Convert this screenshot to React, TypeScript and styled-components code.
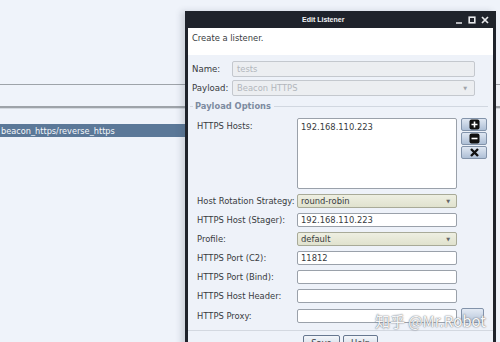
import React from "react";
import styled, { createGlobalStyle } from "styled-components";

const Global = createGlobalStyle`
  html, body { margin: 0; padding: 0; }
  body {
    width: 500px; height: 342px; overflow: hidden;
    background: #eff3fa;
    font-family: "DejaVu Sans", "Noto Sans CJK SC", sans-serif;
    font-size: 8.4px;
    color: #383b40;
  }
  * { box-sizing: border-box; }
`;

const Desktop = styled.div`
  position: relative;
  width: 500px;
  height: 342px;
  overflow: hidden;
`;

const MainWindow = styled.div`
  display: flex;
  flex-direction: column;
  padding-top: 84px;
`;

const Rule = styled.div<{ $gap: number; $double?: boolean }>`
  height: ${(p) => (p.$double ? 2 : 1)}px;
  margin-bottom: ${(p) => p.$gap}px;
  background: #9ea3a9;
  border-bottom: ${(p) => (p.$double ? "1px solid #d4d9e0" : "none")};
  box-sizing: content-box;
`;

const SelectedRow = styled.div`
  height: 13px;
  background: #5b7898;
  color: #f4f7fb;
  display: flex;
  align-items: center;
  padding-left: 1px;
  font-size: 8.2px;
  width: 190px;
`;

const Dialog = styled.div`
  position: absolute;
  left: 185px;
  top: 11px;
  width: 311px;
  height: 345px;
  background: #1f232b;
  padding: 0 3px 0 3px;
  box-shadow: -4px 0 6px rgba(60, 70, 90, 0.18);
  display: flex;
  flex-direction: column;
`;

const TitleBar = styled.div`
  height: 17px;
  position: relative;
  display: flex;
  align-items: center;
  color: #f2f3f5;
  font-family: "Liberation Sans", sans-serif;
  font-weight: bold;
  font-size: 7px;
  padding-left: 114px;
`;

const TitleButtons = styled.div`
  position: absolute;
  right: 4px;
  top: 5px;
  display: flex;
  gap: 5px;
  align-items: center;
`;

const Client = styled.div`
  flex: 1;
  background: #eef2f9;
  display: flex;
  flex-direction: column;
`;

const Header = styled.div`
  height: 27px;
  background: #ffffff;
  padding: 5px 0 0 4px;
`;

const TopRow = styled.div<{ $mt: number }>`
  display: flex;
  align-items: center;
  margin-top: ${(p) => p.$mt}px;
  padding-left: 4px;
  height: 16px;
`;

const TopLabel = styled.div`
  width: 40px;
  font-size: 8.6px;
`;

const DisabledField = styled.div`
  width: 243px;
  height: 16px;
  border: 1px solid #c4c8ce;
  border-radius: 2px;
  background: #eceef1;
  color: #b2b6bc;
  display: flex;
  align-items: center;
  padding-left: 4px;
  position: relative;
`;

const Fieldset = styled.div`
  margin: 10px 5px 0 2px;
  position: relative;
  border-top: 1px solid #d1d7e0;
  padding: 11px 0 0 7px;
`;

const Legend = styled.div`
  position: absolute;
  top: -6px;
  left: 3px;
  background: #eef2f9;
  padding: 0 3px 0 2px;
  color: #7d8ba0;
  font-weight: bold;
  font-size: 8.3px;
`;

const Grid = styled.div`
  display: grid;
  grid-template-columns: 100px 160px 30px;
  row-gap: 5px;
  align-items: center;
`;

const Label = styled.div<{ $top?: boolean }>`
  white-space: nowrap;
  align-self: ${(p) => (p.$top ? "start" : "center")};
  padding-top: ${(p) => (p.$top ? "3px" : "0")};
`;

const TextField = styled.div<{ $h?: number; $top?: boolean }>`
  height: ${(p) => p.$h ?? 14}px;
  background: #ffffff;
  border: 1px solid #9aa1aa;
  border-radius: 2px;
  display: flex;
  align-items: ${(p) => (p.$top ? "flex-start" : "center")};
  padding: ${(p) => (p.$top ? "3px 3px" : "0 3px")};
`;

const Combo = styled.div`
  height: 14px;
  background: linear-gradient(#eeefe2, #e0e2ce);
  border: 1px solid #a8aa98;
  border-radius: 2px;
  display: flex;
  align-items: center;
  justify-content: space-between;
  padding: 0 6px 0 3px;
`;

const Arrow = styled.span<{ $muted?: boolean }>`
  font-size: 5px;
  color: ${(p) => (p.$muted ? "#a0a4aa" : "#666")};
`;

const DisabledArrow = styled(Arrow)`
  position: absolute;
  right: 7px;
`;

const SideButtons = styled.div`
  align-self: start;
  display: flex;
  flex-direction: column;
  gap: 1px;
  padding-left: 4px;
`;

const IconButton = styled.div`
  width: 26px;
  height: 13px;
  border: 1px solid #8293aa;
  border-radius: 2px;
  background: linear-gradient(#dfe7f2, #aebfd6);
  display: flex;
  align-items: center;
  justify-content: center;
`;

const SmallButton = styled.div`
  margin-left: 4px;
  width: 23px;
  height: 15px;
  border: 1px solid #8293aa;
  border-radius: 2px;
  background: linear-gradient(#e3eaf4, #b7c6da);
`;

const Separator = styled.div`
  margin: 7px 0 0 0;
  height: 1px;
  background: #d3d8e0;
`;

const Footer = styled.div`
  display: flex;
  gap: 3px;
  padding-left: 115px;
  margin-top: 4px;
`;

const PushButton = styled.div<{ $w: number }>`
  width: ${(p) => p.$w}px;
  height: 15px;
  border: 1px solid #66778f;
  border-radius: 2px;
  background: linear-gradient(#f3f6fa, #ccd6e3);
  display: flex;
  justify-content: center;
  padding-top: 2px;
`;

const Watermark = styled.div`
  position: absolute;
  left: 375px;
  top: 310px;
  font-family: "Noto Sans CJK SC", "DejaVu Sans", sans-serif;
  font-size: 15px;
  color: rgba(255, 255, 255, 0.94);
  text-shadow: 0 0 1px #6f747c, 0 0 2px #8a8e96;
  white-space: nowrap;
`;

const PlusIcon = () => (
  <svg width="11" height="11" viewBox="0 0 11 11">
    <rect x="0.5" y="0.5" width="10" height="10" rx="2" fill="#111" />
    <path d="M5.5 2.5v6M2.5 5.5h6" stroke="#fff" strokeWidth="1.6" />
  </svg>
);
const MinusIcon = () => (
  <svg width="11" height="11" viewBox="0 0 11 11">
    <rect x="0.5" y="0.5" width="10" height="10" rx="2" fill="#111" />
    <path d="M2.5 5.5h6" stroke="#fff" strokeWidth="1.6" />
  </svg>
);
const CrossIcon = () => (
  <svg width="11" height="11" viewBox="0 0 11 11">
    <path d="M2 2l7 7M9 2l-7 7" stroke="#111" strokeWidth="2.4" />
  </svg>
);

const WinMin = () => (
  <svg width="8" height="8" viewBox="0 0 8 8">
    <path d="M1 7h6" stroke="#e8e9ec" strokeWidth="1.5" />
  </svg>
);
const WinMax = () => (
  <svg width="8" height="8" viewBox="0 0 8 8">
    <rect x="1.2" y="1.2" width="5.6" height="5.6" fill="none" stroke="#e8e9ec" strokeWidth="1.6" />
  </svg>
);
const WinClose = () => (
  <svg width="8" height="8" viewBox="0 0 8 8">
    <path d="M1 1l6 6M7 1l-6 6" stroke="#e8e9ec" strokeWidth="1.7" />
  </svg>
);

export default function App() {
  return (
    <Desktop>
      <Global />
      <MainWindow>
        <Rule $gap={21} />
        <Rule $double $gap={15} />
        <SelectedRow>beacon_https/reverse_https</SelectedRow>
      </MainWindow>

      <Dialog>
        <TitleBar>
          Edit Listener
          <TitleButtons>
            <WinMin />
            <WinMax />
            <WinClose />
          </TitleButtons>
        </TitleBar>
        <Client>
          <Header>Create a listener.</Header>
          <TopRow $mt={6}>
            <TopLabel>Name:</TopLabel>
            <DisabledField>tests</DisabledField>
          </TopRow>
          <TopRow $mt={3}>
            <TopLabel>Payload:</TopLabel>
            <DisabledField>
              Beacon HTTPS
              <DisabledArrow $muted>▼</DisabledArrow>
            </DisabledField>
          </TopRow>
          <Fieldset>
            <Legend>Payload Options</Legend>
            <Grid>
              <Label $top>HTTPS Hosts:</Label>
              <TextField $h={71} $top>192.168.110.223</TextField>
              <SideButtons>
                <IconButton><PlusIcon /></IconButton>
                <IconButton><MinusIcon /></IconButton>
                <IconButton><CrossIcon /></IconButton>
              </SideButtons>

              <Label>Host Rotation Strategy:</Label>
              <Combo>round-robin<Arrow>▼</Arrow></Combo>
              <span />

              <Label>HTTPS Host (Stager):</Label>
              <TextField>192.168.110.223</TextField>
              <span />

              <Label>Profile:</Label>
              <Combo>default<Arrow>▼</Arrow></Combo>
              <span />

              <Label>HTTPS Port (C2):</Label>
              <TextField>11812</TextField>
              <span />

              <Label>HTTPS Port (Bind):</Label>
              <TextField />
              <span />

              <Label>HTTPS Host Header:</Label>
              <TextField />
              <span />

              <Label>HTTPS Proxy:</Label>
              <TextField />
              <SmallButton />
            </Grid>
          </Fieldset>
          <Separator />
          <Footer>
            <PushButton $w={37}>Save</PushButton>
            <PushButton $w={35}>Help</PushButton>
          </Footer>
        </Client>
      </Dialog>
      <Watermark>知乎 @Mr.Robot</Watermark>
    </Desktop>
  );
}
